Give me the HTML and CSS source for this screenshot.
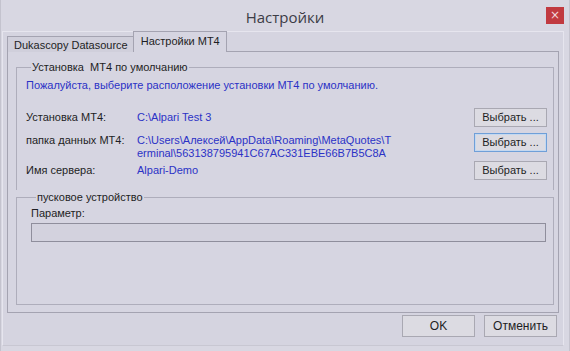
FILE: index.html
```html
<!DOCTYPE html>
<html lang="ru">
<head>
<meta charset="utf-8">
<title>Настройки</title>
<link rel="stylesheet" href="styles.css">
</head>
<body>
<div class="window">
  <div class="titlebar">
    <span></span>
    <span class="title">Настройки</span>
    <span class="close">×</span>
  </div>
  <div class="client">
    <div class="tabs">
      <div class="tab">Dukascopy Datasource</div>
      <div class="tab active">Настройки MT4</div>
    </div>
    <div class="panel">
      <fieldset class="group group-top">
        <legend>Установка&nbsp; MT4 по умолчанию</legend>
        <div class="hint">Пожалуйста, выберите расположение установки MT4 по умолчанию.</div>
        <div class="row row1">
          <span class="label">Установка MT4:</span>
          <span class="value">C:\Alpari Test 3</span>
          <button class="btn">Выбрать ...</button>
        </div>
        <div class="row row2">
          <span class="label">папка данных MT4:</span>
          <span class="value">C:\Users\Алексей\AppData\Roaming\MetaQuotes\T<br>erminal\563138795941C67AC331EBE66B7B5C8A</span>
          <button class="btn focused">Выбрать ...</button>
        </div>
        <div class="row row3">
          <span class="label">Имя сервера:</span>
          <span class="value">Alpari-Demo</span>
          <button class="btn">Выбрать ...</button>
        </div>
      </fieldset>
      <fieldset class="group group-bottom">
        <legend>пусковое устройство</legend>
        <div class="param-label">Параметр:</div>
        <div class="input"></div>
      </fieldset>
    </div>
    <div class="footer">
      <button class="btn big">OK</button>
      <button class="btn big">Отменить</button>
    </div>
  </div>
</div>
</body>
</html>
```

FILE: styles.css
```css
html, body {
  margin: 0;
  padding: 0;
}
body {
  width: 570px;
  height: 351px;
  overflow: hidden;
  background: #d6d5e1;
  font-family: "Liberation Sans", Arial, sans-serif;
  font-size: 11px;
  color: #1e1e24;
}
.window {
  width: 570px;
  height: 351px;
  box-sizing: border-box;
  background: #d8d7e2;
  border-left: 1px solid #c4c3ce;
  border-right: 1px solid #c4c3ce;
  display: flex;
  flex-direction: column;
}
.titlebar {
  height: 31px;
  display: grid;
  grid-template-columns: 1fr auto 1fr;
  align-items: start;
}
.title {
  font-family: "Open Sans", "Noto Sans", sans-serif;
  font-size: 15px;
  color: #3c3c46;
  line-height: 20px;
  margin-top: 7px;
}
.close {
  justify-self: end;
  width: 18px;
  height: 17px;
  margin-top: 7px;
  margin-right: 5px;
  background: #c13a40;
  color: #f2d8da;
  font-size: 12px;
  line-height: 16px;
  text-align: center;
  font-family: "DejaVu Sans", sans-serif;
}
.client {
  margin: 0 5px 0 1px;
  height: 315px;
  box-sizing: border-box;
  border: 1px solid #e6e5ee;
  border-bottom-color: #c8c7d2;
  background: #d5d4e0;
  padding: 0 4px 0 4px;
  display: flex;
  flex-direction: column;
}
.tabs {
  display: flex;
  align-items: flex-end;
  height: 20px;
  position: relative;
  z-index: 1;
  margin-bottom: -1px;
}
.tab {
  height: 16px;
  box-sizing: border-box;
  border: 1px solid #a4a3b1;
  border-bottom: none;
  padding: 0 5px 0 6px;
  line-height: 16px;
  background: #d0cfdb;
  color: #1e1e24;
  white-space: nowrap;
}
.tab.active {
  height: 21px;
  background: #d6d5e1;
  padding: 0 6px 0 7px;
  line-height: 18px;
  margin-left: -1px;
}
.panel {
  height: 262px;
  box-sizing: border-box;
  border: 1px solid #a4a3b1;
  background: #d6d5e1;
  padding: 8px 4px 0 8px;
  display: flex;
  flex-direction: column;
}
.group {
  margin: 0;
  border: 1px solid #aeadbb;
  padding: 0 0 0 9px;
  min-width: 0;
}
.group legend {
  padding: 0 1px;
  margin-left: 5px;
  line-height: 14px;
  color: #1e1e24;
}
.group-top {
  border-bottom: none;
  height: 130px;
  box-sizing: border-box;
  padding-right: 6px;
}
.group-bottom {
  height: 115px;
  box-sizing: border-box;
  padding-left: 14px;
  padding-right: 7px;
}
.hint {
  color: #2b32c6;
  line-height: 14px;
  margin-top: 4px;
}
.row {
  display: grid;
  grid-template-columns: 111px 1fr 73px;
  align-items: center;
}
.row1 {
  margin-top: 15px;
  height: 20px;
}
.row2 {
  margin-top: 6px;
  align-items: start;
  height: 26px;
}
.row2 .value, .row2 .label {
  line-height: 13px;
  margin-top: 1px;
}
.row3 {
  margin-top: 1px;
  height: 20px;
}
.label {
  line-height: 14px;
}
.value {
  color: #2b32c6;
  line-height: 14px;
}
.btn {
  font-family: "Liberation Sans", Arial, sans-serif;
  font-size: 11px;
  color: #1e1e24;
  height: 19px;
  width: 73px;
  padding: 0;
  margin: 0;
  background: #dcdbe2;
  border: 1px solid #a9a8b2;
  border-radius: 0;
  line-height: 17px;
}
.btn.focused {
  border-color: #6f9fd8;
  box-shadow: inset 0 0 0 1px #c4d8f0;
}
.param-label {
  line-height: 14px;
  margin-top: 2px;
}
.input {
  margin-top: 3px;
  height: 19px;
  box-sizing: border-box;
  border: 1px solid #8f8e9c;
  background: #d3d2de;
}
.footer {
  display: flex;
  justify-content: flex-end;
  gap: 9px;
  margin-top: 2px;
  padding-right: 2px;
}
.btn.big {
  height: 22px;
  width: 73px;
  font-size: 12px;
  line-height: 20px;
}
```
